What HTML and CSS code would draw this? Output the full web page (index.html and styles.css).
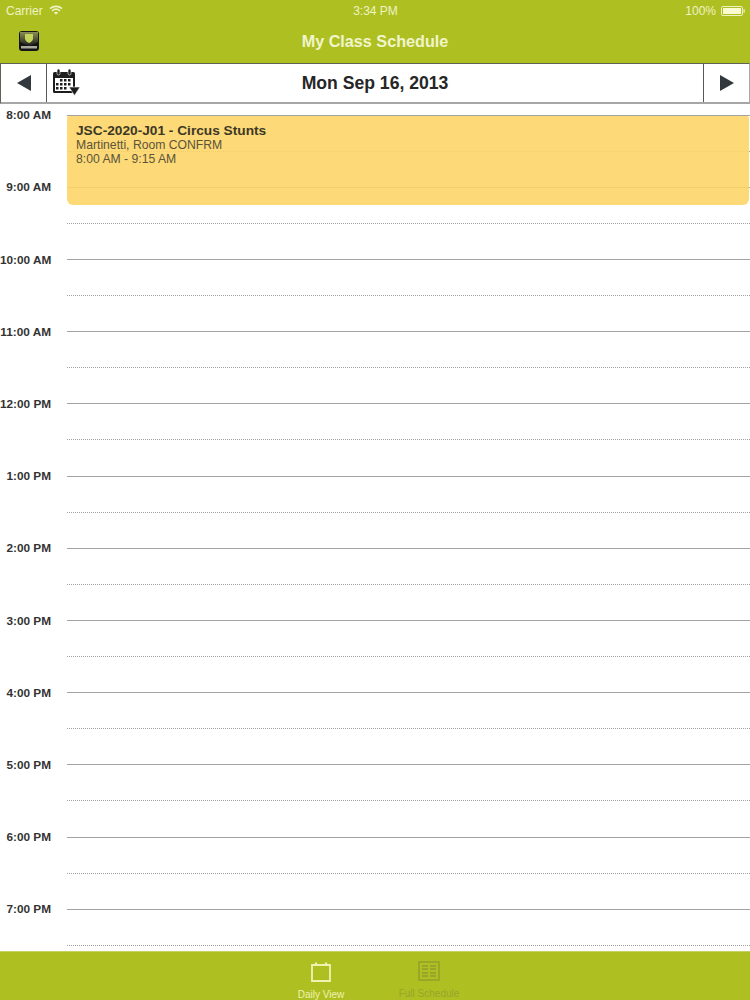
FILE: index.html
```html
<!DOCTYPE html>
<html lang="en">
<head>
<meta charset="utf-8">
<title>My Class Schedule</title>
<link rel="stylesheet" href="styles.css">
</head>
<body>
<div class="app">
  <header class="top">
    <div class="status">
      <div class="status-left">
        <span>Carrier</span>
        <svg class="wifi" width="14" height="10" viewBox="0 0 14 10"><path d="M1 3.600C4.400.6 9.600.6 13 3.600" fill="none" stroke="currentColor" stroke-width="1.600"/><path d="M3 5.800c2.400-2 5.600-2 8 0" fill="none" stroke="currentColor" stroke-width="1.600"/><path d="M4.800 7.500c1.300-.9 3.100-.9 4.400 0L7 9.800z" fill="currentColor"/></svg>
      </div>
      <div class="status-time">3:34 PM</div>
      <div class="status-right">
        <span>100%</span>
        <svg width="24" height="10" viewBox="0 0 24 10"><rect x=".5" y=".5" width="21" height="9" rx="1.500" fill="none" stroke="currentColor"/><rect x="2" y="2" width="18" height="6" fill="#fbfbd2"/><rect x="22.500" y="3.200" width="1.200" height="3.600" fill="currentColor"/></svg>
      </div>
    </div>
    <div class="titlebar">
      <svg class="logo" width="20" height="20" viewBox="0 0 20 20">
        <defs><linearGradient id="logo-fade" x1="0" y1="0" x2="0" y2="1"><stop offset="0" stop-color="#8b8e55"/><stop offset="1" stop-color="#1c1c1c"/></linearGradient></defs>
        <rect width="20" height="20" rx="3" fill="#141414"/>
        <path d="M1 1h18v10l-9 4-9-4z" fill="url(#logo-fade)"/>
        <path d="M6 3h8v4.500c0 2-2 3.500-4 4.500-2-1-4-2.500-4-4.500z" fill="#c4d35a"/>
        <rect x="2" y="15" width="16" height="2.500" fill="#a9a9a0"/>
      </svg>
      <h1 class="title">My Class Schedule</h1>
    </div>
  </header>

  <nav class="datebar">
    <div class="arrow-cell arrow-left">
      <svg width="14" height="16" viewBox="0 0 14 16"><path d="M14 0v16L0 8z" fill="#33383f"/></svg>
    </div>
    <div class="date-main">
      <svg class="cal" width="28" height="27" viewBox="0 0 28 27">
        <rect x="1" y="3" width="22" height="21" rx="1.500" fill="#1d1d1d"/>
        <rect x="3" y="9" width="18" height="13" fill="#fff"/>
        <rect x="5" y="0" width="3" height="6" rx="1.500" fill="#1d1d1d" stroke="#fff" stroke-width=".6"/>
        <rect x="16" y="0" width="3" height="6" rx="1.500" fill="#1d1d1d" stroke="#fff" stroke-width=".6"/>
        <g fill="#1d1d1d">
          <rect x="8" y="10" width="2.500" height="2.500"/><rect x="12" y="10" width="2.500" height="2.500"/><rect x="16" y="10" width="2.500" height="2.500"/>
          <rect x="4" y="14" width="2.500" height="2.500"/><rect x="8" y="14" width="2.500" height="2.500"/><rect x="12" y="14" width="2.500" height="2.500"/><rect x="16" y="14" width="2.500" height="2.500"/>
          <rect x="4" y="18" width="2.500" height="2.500"/><rect x="8" y="18" width="2.500" height="2.500"/><rect x="12" y="18" width="2.500" height="2.500"/>
        </g>
        <path d="M17 18h11l-5.500 8.500z" fill="#1d1d1d" stroke="#fff" stroke-width=".6"/>
      </svg>
      <span class="date-text">Mon Sep 16, 2013</span>
    </div>
    <div class="arrow-cell arrow-right">
      <svg width="14" height="16" viewBox="0 0 14 16"><path d="M0 0v16l14-8z" fill="#33383f"/></svg>
    </div>
  </nav>

  <main class="schedule">
    <div class="hour"><div class="hour-label">8:00 AM</div><div class="track"><div class="half"></div></div></div>
    <div class="hour"><div class="hour-label">9:00 AM</div><div class="track"><div class="half"></div></div></div>
    <div class="hour"><div class="hour-label">10:00 AM</div><div class="track"><div class="half"></div></div></div>
    <div class="hour"><div class="hour-label">11:00 AM</div><div class="track"><div class="half"></div></div></div>
    <div class="hour"><div class="hour-label">12:00 PM</div><div class="track"><div class="half"></div></div></div>
    <div class="hour"><div class="hour-label">1:00 PM</div><div class="track"><div class="half"></div></div></div>
    <div class="hour"><div class="hour-label">2:00 PM</div><div class="track"><div class="half"></div></div></div>
    <div class="hour"><div class="hour-label">3:00 PM</div><div class="track"><div class="half"></div></div></div>
    <div class="hour"><div class="hour-label">4:00 PM</div><div class="track"><div class="half"></div></div></div>
    <div class="hour"><div class="hour-label">5:00 PM</div><div class="track"><div class="half"></div></div></div>
    <div class="hour"><div class="hour-label">6:00 PM</div><div class="track"><div class="half"></div></div></div>
    <div class="hour"><div class="hour-label">7:00 PM</div><div class="track"><div class="half"></div></div></div>
    <article class="event">
      <div class="event-title">JSC-2020-J01 - Circus Stunts</div>
      <div class="event-line">Martinetti, Room CONFRM</div>
      <div class="event-line">8:00 AM - 9:15 AM</div>
    </article>
  </main>

  <footer class="tabs">
    <div class="tab tab-active">
      <svg width="20" height="21" viewBox="0 0 20 21"><path d="M1 4h18v16H1z" fill="none" stroke="currentColor" stroke-width="1.800"/><path d="M5 1.500v3M15 1.500v3" stroke="currentColor" stroke-width="2.200"/></svg>
      <span class="tab-label">Daily View</span>
    </div>
    <div class="tab tab-idle">
      <svg width="22" height="20" viewBox="0 0 22 20"><rect x="1" y="1" width="20" height="18" fill="none" stroke="currentColor" stroke-width="1.800"/><path d="M4 5h6M12 5h6M4 8h6M12 8h6M4 12h6M12 12h6M4 15h6M12 15h6" stroke="currentColor" stroke-width="2"/></svg>
      <span class="tab-label">Full Schedule</span>
    </div>
  </footer>
</div>
</body>
</html>
```

FILE: styles.css
```css
* { box-sizing: border-box; }
html, body { margin: 0; padding: 0; background: #fff; }
body { font-family: "Liberation Sans", Arial, sans-serif; }

.app {
  width: 750px;
  height: 1000px;
  display: flex;
  flex-direction: column;
  overflow: hidden;
}

.top {
  height: 63px;
  background: #aebf22;
  color: #f2f6d0;
  flex: none;
}

.status {
  height: 21px;
  display: grid;
  grid-template-columns: 1fr auto 1fr;
  align-items: center;
  padding: 0 5px 0 6px;
  font-size: 12px;
  color: #eef3c4;
}
.status-left { display: flex; align-items: center; gap: 6px; }
.status-time { text-align: center; }
.status-right { display: flex; align-items: center; justify-content: flex-end; gap: 5px; }
.wifi { margin-top: -1px; }

.titlebar {
  height: 42px;
  display: flex;
  align-items: center;
  justify-content: center;
  position: relative;
  padding-bottom: 2px;
}
.logo { position: absolute; left: 19px; top: 10px; }
.title {
  margin: 0;
  font-size: 16.200px;
  font-weight: bold;
  color: #f1f5cc;
}

.datebar {
  height: 41px;
  flex: none;
  display: flex;
  background: #fff;
  border-top: 1px solid #5d6156;
  border-bottom: 2px solid #a6a6a6;
  border-left: 1px solid #5d6156;
  border-right: 1px solid #a8a8a8;
}
.arrow-cell {
  width: 46px;
  flex: none;
  display: flex;
  align-items: center;
  justify-content: center;
}
.arrow-left { border-right: 1px solid #55585c; }
.arrow-right { border-left: 1px solid #55585c; }
.date-main {
  flex: 1;
  display: flex;
  align-items: center;
  justify-content: center;
  position: relative;
}
.cal { position: absolute; left: 5px; top: 5px; }
.date-text {
  font-size: 17.600px;
  font-weight: bold;
  color: #262626;
}

.schedule {
  flex: 1;
  min-height: 0;
  position: relative;
  padding-top: 10.800px;
  overflow: hidden;
}
.hour {
  height: 72.180px;
  display: grid;
  grid-template-columns: 51px 1fr;
  column-gap: 16px;
}
.hour-label {
  font-size: 11.800px;
  font-weight: bold;
  line-height: 14px;
  margin-top: -6.500px;
  text-align: right;
  color: #333;
  white-space: nowrap;
}
.track { border-top: 1px solid #a3a3a3; }
.half {
  margin-top: 35px;
  border-top: 1px dotted #a0a0a0;
}

.event {
  position: absolute;
  left: 67px;
  right: 1px;
  top: 12px;
  height: 89px;
  padding: 7px 9px;
  background: rgba(253, 212, 100, .88);
  border-radius: 2px 2px 6px 6px;
}
.event-title {
  font-size: 13.700px;
  font-weight: bold;
  line-height: 15px;
  color: #3c3826;
}
.event-line {
  font-size: 12.200px;
  line-height: 14px;
  color: #5b5539;
}

.tabs {
  height: 49px;
  flex: none;
  background: #aebf22;
  border-top: 1px solid #c5d161;
  display: flex;
  justify-content: center;
  align-items: flex-start;
  gap: 32px;
  padding-top: 9px;
}
.tab {
  width: 76px;
  display: flex;
  flex-direction: column;
  align-items: center;
  gap: 7px;
}
.tab-label { font-size: 10px; line-height: 11px; white-space: nowrap; }
.tab-active { color: #eef4b0; }
.tab-idle { color: #98a52a; }
```
